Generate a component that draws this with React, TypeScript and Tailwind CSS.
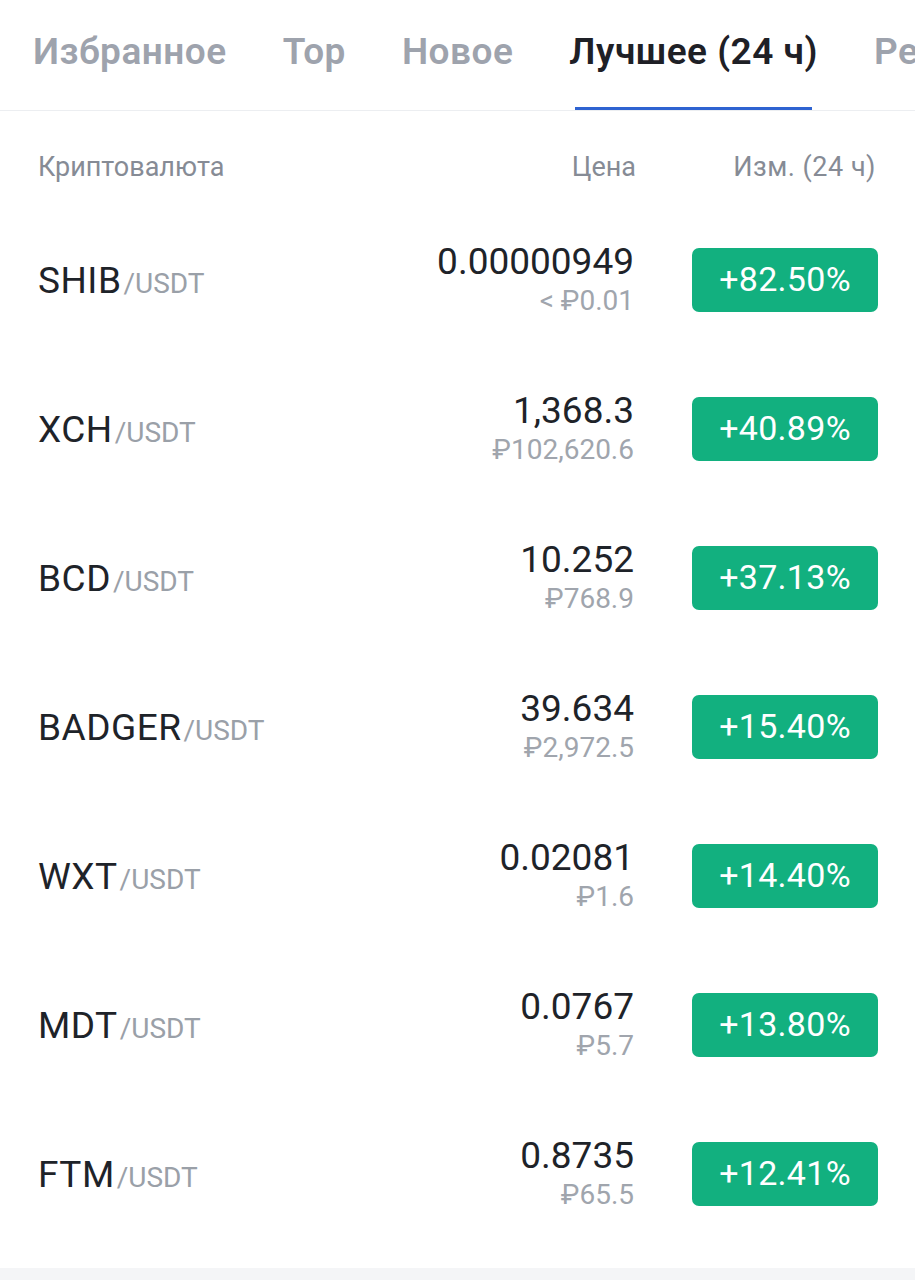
import React from "react";

const tabs = ["Избранное", "Тор", "Новое", "Лучшее (24 ч)", "Рейтинг"];

const rows = [
  { symbol: "SHIB", price: "0.00000949", fiat: "< ₽0.01", change: "+82.50%" },
  { symbol: "XCH", price: "1,368.3", fiat: "₽102,620.6", change: "+40.89%" },
  { symbol: "BCD", price: "10.252", fiat: "₽768.9", change: "+37.13%" },
  { symbol: "BADGER", price: "39.634", fiat: "₽2,972.5", change: "+15.40%" },
  { symbol: "WXT", price: "0.02081", fiat: "₽1.6", change: "+14.40%" },
  { symbol: "MDT", price: "0.0767", fiat: "₽5.7", change: "+13.80%" },
  { symbol: "FTM", price: "0.8735", fiat: "₽65.5", change: "+12.41%" },
];

const App = () => {
  const activeTab = "Лучшее (24 ч)";

  return (
    <div className="min-h-screen w-[915px] bg-[#f4f5f7] font-['Roboto',sans-serif]">
      <div className="bg-white pb-[20px]">
        {/* tabs */}
        <div className="flex h-[111px] gap-[56px] overflow-hidden whitespace-nowrap border-b border-[#eceef1] pl-[33px]">
          {tabs.map((tab) => (
            <div key={tab} className="flex flex-col">
              <span
                className={`pt-[29px] text-[37px] leading-[46px] font-semibold tracking-[0.5px] ${
                  tab === activeTab ? "text-[#1e2026]" : "text-[#9ea3ad]"
                }`}
              >
                {tab}
              </span>
              {tab === activeTab && (
                <div className="mx-[6px] mt-auto h-[3px] bg-[#2e63d1]" />
              )}
            </div>
          ))}
        </div>

        {/* column titles */}
        <div className="flex h-[94px] items-start px-[38px] pt-[40px] text-[27px] leading-[32px] text-[#868b95]">
          <span className="flex-1">Криптовалюта</span>
          <span className="text-right">Цена</span>
          <span className="ml-[55px] w-[186px] pr-[1px] text-right tracking-[0.5px]">Изм. (24 ч)</span>
        </div>

        {/* list */}
        <div className="flex flex-col px-[37px]">
          {rows.map((row) => (
            <div key={row.symbol} className="flex h-[149px] items-center">
              <div className="flex flex-1 items-baseline pl-[1px] pt-[2px]">
                <span className="text-[37px] leading-[44px] tracking-[0.5px] text-[#1e2329]">
                  {row.symbol}
                </span>
                <span className="ml-[2px] text-[28px] leading-[30px] text-[#9aa0a8]">/USDT</span>
              </div>
              <div className="flex flex-col items-end pr-[1px]">
                <span className="text-[37px] leading-[36px] text-[#1e2329]">
                  {row.price}
                </span>
                <span className="mt-[6px] text-[28px] leading-[30px] text-[#a0a5ad]">
                  {row.fiat}
                </span>
              </div>
              <div className="ml-[57px] flex h-[64px] w-[186px] items-center justify-center rounded-[7px] bg-[#12b07f] text-[34px] tracking-[0.3px] text-white">
                {row.change}
              </div>
            </div>
          ))}
        </div>
      </div>
    </div>
  );
};

export default App;
